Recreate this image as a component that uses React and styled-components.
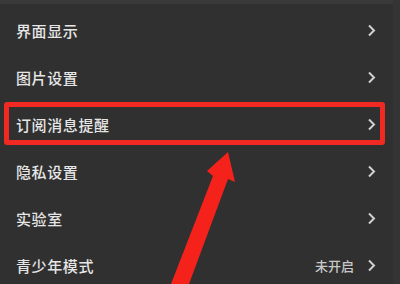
import React from 'react'
import styled, { createGlobalStyle } from 'styled-components'

const GlobalStyle = createGlobalStyle`
  html, body {
    margin: 0;
    padding: 0;
    background: #303030;
  }
  body {
    font-family: "Noto Sans CJK SC", "Noto Sans", sans-serif;
  }
`

const items = [
  { label: '界面显示' },
  { label: '图片设置' },
  { label: '订阅消息提醒', highlight: true },
  { label: '隐私设置' },
  { label: '实验室' },
  { label: '青少年模式', value: '未开启' },
]

const Chevron = () => (
  <svg width="9" height="13" viewBox="0 0 9 13">
    <path d="M2 1.5 L7 6.5 L2 11.5" fill="none" stroke="#d0d0d0" strokeWidth="2" />
  </svg>
)

const Arrow = () => (
  <ArrowSvg width="400" height="284" viewBox="0 0 400 284">
    <path
      d="M171 284 L213 176 L207 171 L228 152 L235 182 L228 179 L189 284 Z"
      fill="#f5221b"
    />
  </ArrowSvg>
)

const Settings = () => {
  return (
    <Wrapper>
      <TopBar />
      <List>
        {items.map((item) => (
          <Row key={item.label} $highlight={item.highlight}>
            <Label>{item.label}</Label>
            <Right>
              {item.value && <Value>{item.value}</Value>}
              <Chevron />
            </Right>
          </Row>
        ))}
      </List>
      <Arrow />
    </Wrapper>
  )
}

const App = () => (
  <>
    <GlobalStyle />
    <Settings />
  </>
)

const Wrapper = styled.div`
  position: relative;
  width: 400px;
  height: 284px;
  overflow: hidden;
  background: #303030;
  border-right: 7px solid #343434;
  box-sizing: border-box;
`

const TopBar = styled.div`
  height: 4px;
  background: #393939;
`

const List = styled.div`
  display: flex;
  flex-direction: column;
  padding-top: 3px;
`

const Row = styled.div`
  position: relative;
  height: 47px;
  display: flex;
  align-items: center;
  justify-content: space-between;
  padding: 0 17px 0 16px;

  ${({ $highlight }) => $highlight && `
    &::after {
      content: '';
      position: absolute;
      left: 4px;
      width: 381px;
      top: 1px;
      height: 43px;
      border: 5px solid #f02a22;
      border-radius: 3px;
      box-sizing: border-box;
    }
  `}
`

const Label = styled.span`
  color: #e6e6e6;
  font-size: 15px;
  font-weight: 500;
  letter-spacing: 0.6px;
`

const Right = styled.div`
  display: flex;
  align-items: center;
  gap: 13px;
`

const Value = styled.span`
  color: #c8c8c8;
  font-size: 13px;
  font-weight: 500;
`

const ArrowSvg = styled.svg`
  position: absolute;
  left: 0;
  top: 0;
  pointer-events: none;
`

export default App
